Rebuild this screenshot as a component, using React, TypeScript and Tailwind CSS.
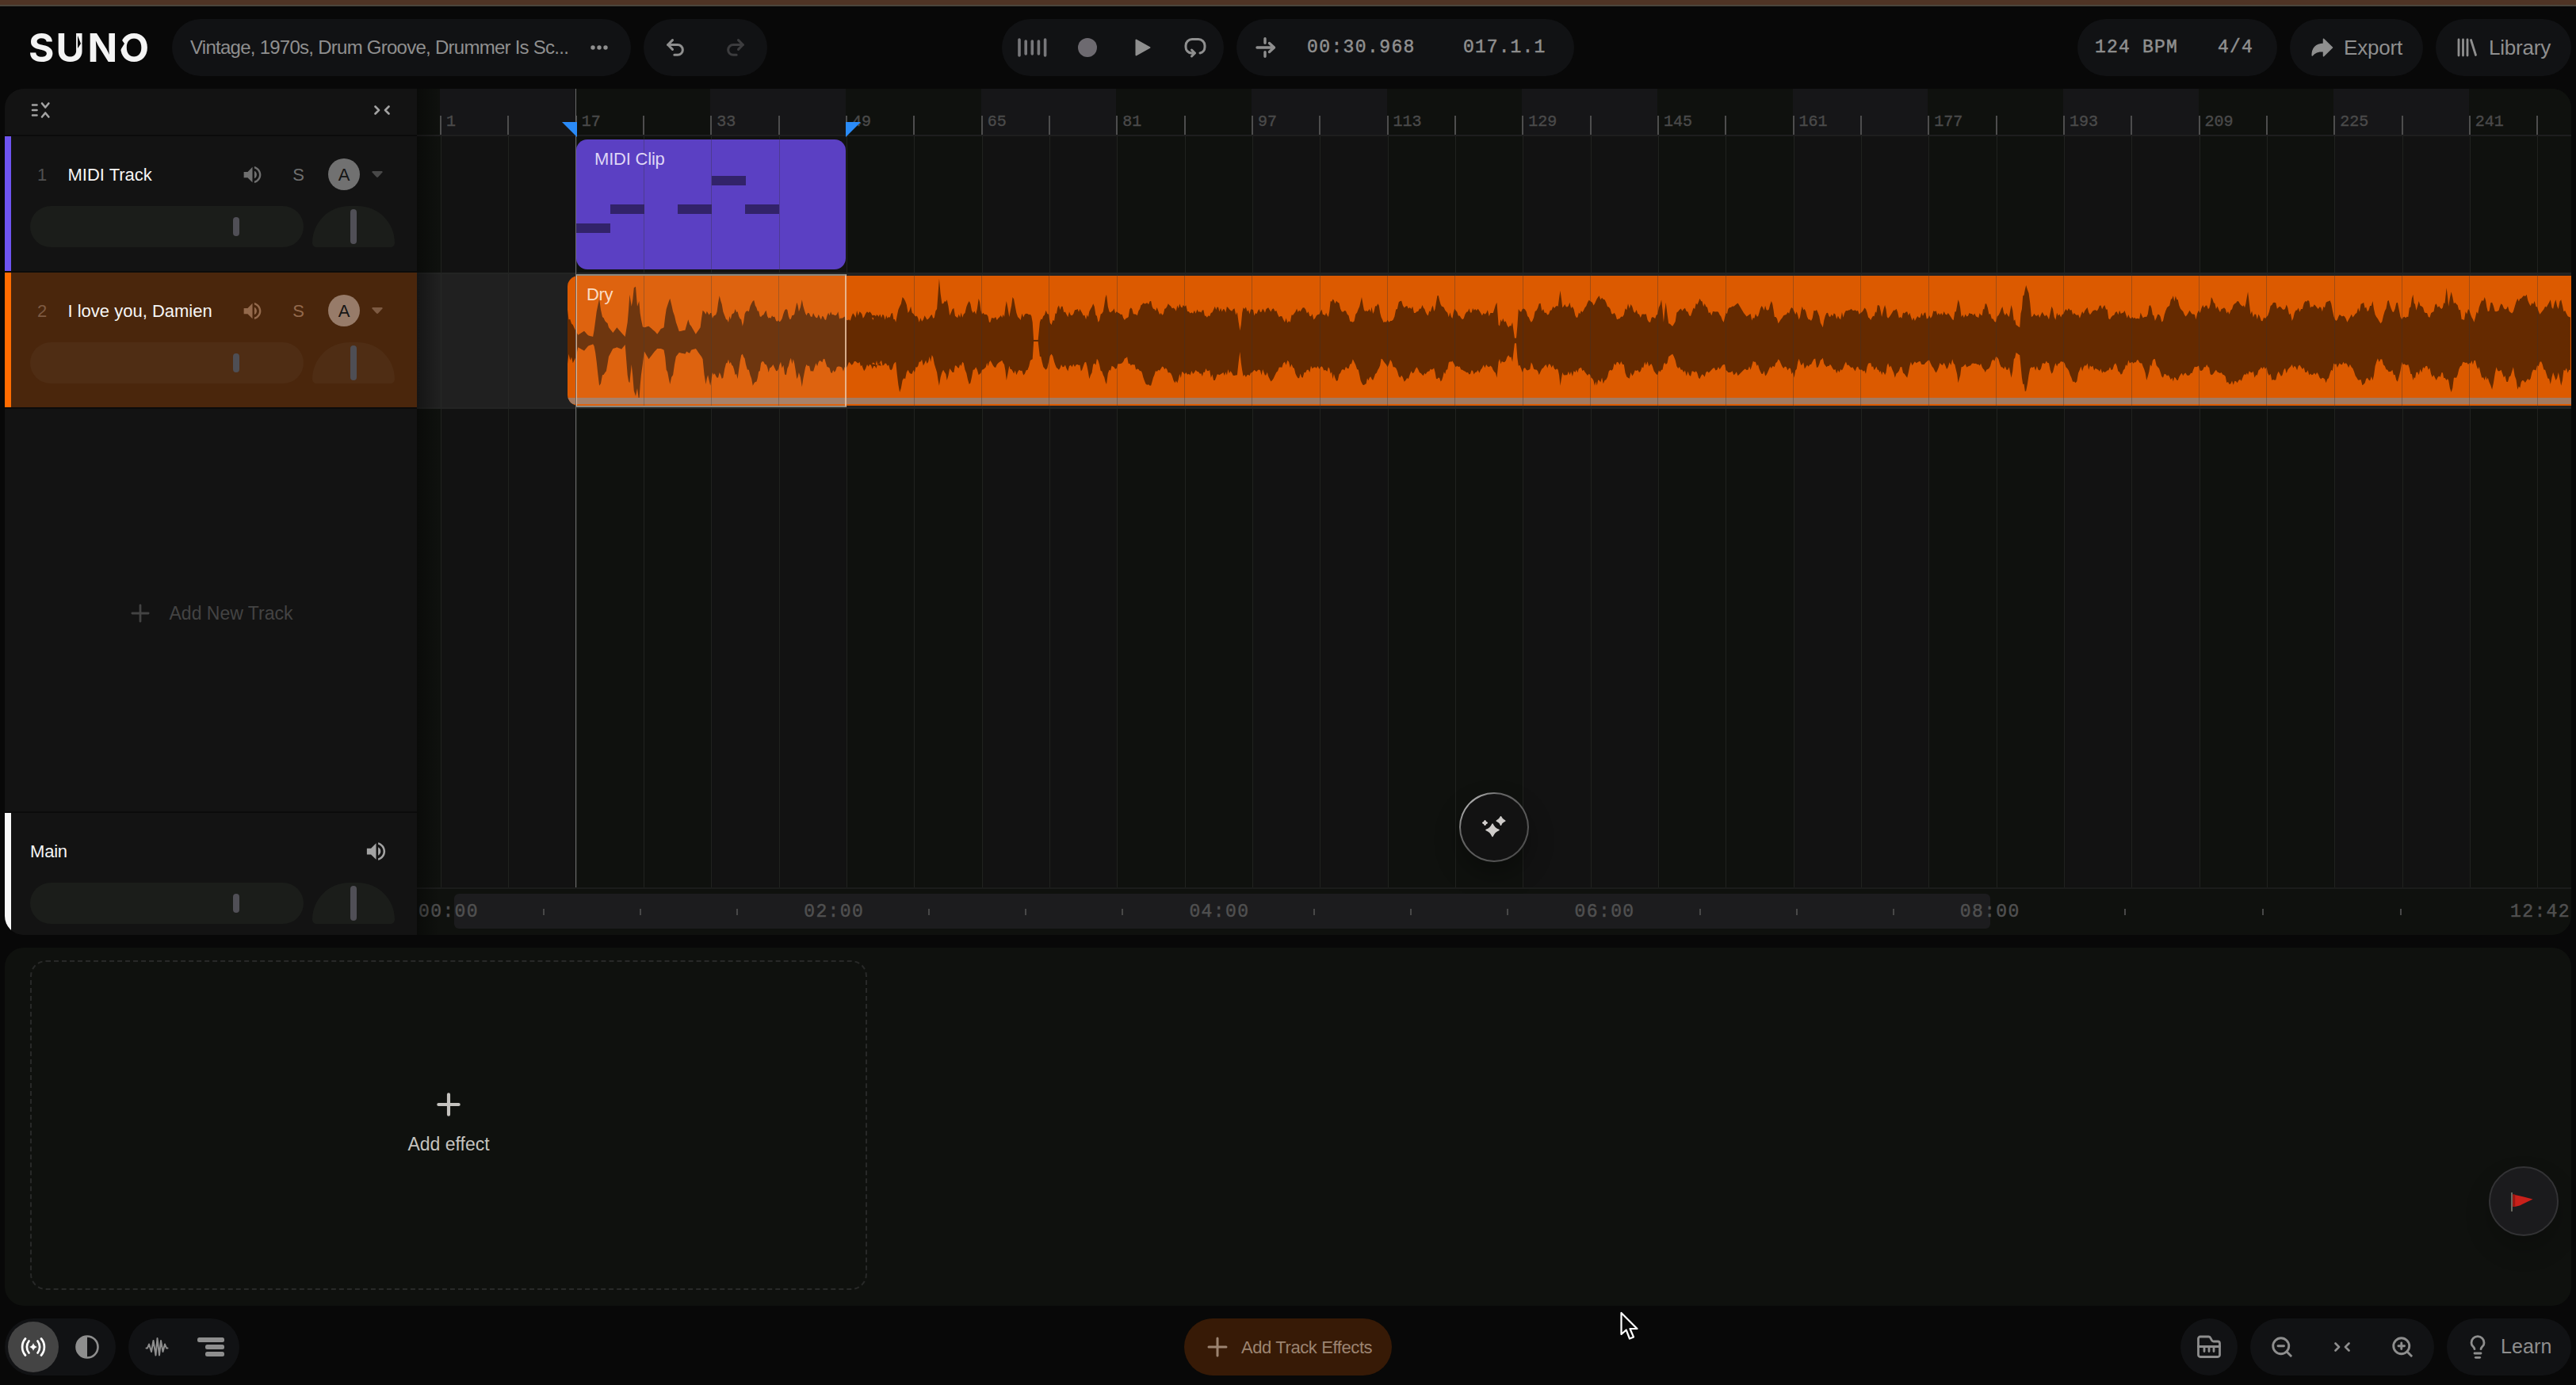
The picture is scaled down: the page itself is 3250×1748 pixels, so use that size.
import React from 'react';
import { Undo2, Redo2, ZoomIn, ZoomOut, Lightbulb } from 'lucide-react';
import { MdVolumeUp } from 'react-icons/md';

const BARS = Array.from({ length: 32 }, (_, i) => i);
const BAR_WIDTH = 85.34;

// each chunk: where it starts in the clip, px per unit, then [x, up, down] peaks
const chunks: { start: number; unit: number; peaks: number[][] }[] = [
  {
    start: -196,
    unit: 0.3827,
    peaks: [
      [512, 120, 90], [516, 80, 50], [530, 60, 85], [540, 35, 60], [547, 22, 25], [567, 37, 38], [580, 20, 20], [596, 15, 13], [600, 40, 20], [608, 110, 80], [617, 158, 170], [627, 90, 130], [640, 70, 115], [648, 50, 60], [662, 30, 30], [675, 50, 25], [690, 30, 32], [702, 15, 15],
      [710, 70, 130], [717, 175, 160], [723, 130, 90], [731, 200, 190], [737, 205, 210], [742, 130, 180], [748, 150, 232], [755, 80, 130], [765, 50, 40], [780, 55, 70], [800, 35, 40], [808, 25, 30], [820, 45, 30], [830, 50, 35], [838, 120, 110], [850, 160, 165], [860, 110, 130], [870, 70, 60], [880, 35, 45], [900, 40, 50], [910, 80, 45], [920, 55, 35],
      [935, 25, 30], [950, 50, 55], [958, 115, 70], [968, 100, 165], [975, 105, 130], [983, 105, 170], [990, 85, 120], [1005, 110, 140], [1013, 170, 120], [1025, 110, 140], [1035, 80, 85], [1050, 80, 80], [1065, 120, 130], [1073, 110, 145], [1085, 80, 55], [1089, 55, 50], [1100, 110, 90], [1110, 110, 110], [1123, 150, 170], [1135, 125, 155], [1150, 90, 85],
      [1167, 115, 90], [1175, 85, 120], [1190, 90, 90], [1200, 75, 115], [1215, 75, 80], [1233, 120, 130], [1245, 80, 75], [1260, 100, 85], [1268, 145, 145], [1275, 110, 120], [1285, 155, 175], [1300, 95, 90], [1318, 90, 115], [1340, 100, 80], [1360, 80, 70], [1380, 110, 120], [1400, 100, 100], [1430, 80, 105], [1440, 80, 80], [1475, 110, 80], [1490, 90, 115], [1500, 110, 90], [1530, 90, 105], [1550, 95, 80],
    ],
  },
  {
    start: 384,
    unit: 0.7015,
    peaks: [
      [0, 88, 88], [15, 100, 80], [28, 85, 95], [37, 105, 105], [43, 70, 80], [50, 130, 195], [55, 165, 150], [60, 150, 145], [65, 105, 110], [70, 130, 125], [77, 95, 120], [85, 70, 80], [95, 95, 85], [110, 85, 62], [117, 120, 120], [121, 235, 170], [126, 140, 120], [131, 150, 120], [135, 155, 150], [140, 95, 105], [145, 120, 120], [152, 90, 95], [165, 100, 85],
      [175, 150, 165], [182, 105, 110], [187, 100, 100], [192, 160, 130], [198, 100, 110], [205, 100, 100], [213, 70, 75], [220, 85, 100], [230, 90, 80], [238, 90, 90], [242, 150, 150], [247, 90, 95], [253, 165, 115], [260, 105, 130], [265, 85, 110], [275, 100, 125], [285, 100, 75], [289, 70, 70], [291, 3, 3], [299, 3, 3], [302, 70, 60], [306, 80, 80], [313, 115, 110], [318, 100, 80], [323, 60, 50],
      [328, 75, 80], [334, 125, 105], [343, 130, 100], [350, 100, 105], [360, 95, 100], [370, 120, 90], [378, 105, 110], [385, 80, 80], [391, 110, 145], [398, 140, 90], [407, 70, 75], [416, 110, 130], [422, 175, 165], [427, 110, 110], [440, 110, 105], [450, 100, 85], [457, 85, 65], [468, 120, 90], [475, 100, 110], [482, 120, 115], [490, 140, 150], [500, 150, 170], [508, 120, 130],
      [520, 105, 105], [535, 135, 120], [545, 120, 160], [560, 135, 120], [570, 110, 125], [580, 115, 120], [590, 110, 125], [605, 95, 115], [617, 130, 150], [625, 110, 130], [632, 120, 120], [645, 115, 115], [657, 108, 130], [662, 38, 42], [668, 125, 135], [675, 110, 130], [690, 105, 115], [705, 115, 120], [713, 125, 135], [720, 120, 150], [730, 100, 115], [740, 80, 85], [750, 75, 80],
      [762, 110, 125], [775, 125, 140], [785, 110, 110], [797, 85, 100], [807, 110, 100], [815, 95, 110], [821, 90, 100], [825, 150, 125], [833, 140, 140], [838, 145, 150], [845, 110, 110], [855, 100, 105], [865, 70, 70], [875, 120, 110], [881, 165, 160], [887, 110, 165], [895, 120, 140], [903, 110, 140], [910, 140, 110], [918, 80, 70], [925, 70, 90], [935, 75, 80], [945, 120, 115],
      [950, 150, 140], [960, 130, 150], [970, 120, 115], [980, 110, 100], [990, 135, 130], [998, 100, 120], [1007, 125, 110], [1013, 120, 120], [1017, 170, 145], [1025, 130, 150], [1033, 110, 110], [1042, 90, 80], [1050, 115, 100], [1062, 80, 110], [1072, 110, 120], [1085, 120, 120], [1095, 105, 110], [1105, 105, 90], [1115, 105, 100], [1124, 145, 140], [1127, 60, 80], [1135, 85, 80],
      [1145, 50, 55], [1152, 70, 80], [1156, 10, 10], [1159, 10, 10], [1163, 120, 95], [1170, 120, 120], [1177, 110, 110], [1188, 75, 90], [1200, 140, 130], [1210, 105, 95], [1220, 115, 90], [1230, 130, 110], [1234, 130, 110], [1238, 190, 170], [1242, 125, 120], [1255, 145, 130], [1265, 95, 120], [1280, 115, 110], [1292, 150, 130], [1300, 140, 170], [1308, 170, 150], [1318, 155, 150],
      [1328, 120, 110], [1340, 80, 80], [1350, 90, 90], [1360, 140, 140], [1370, 110, 125], [1380, 100, 120], [1390, 100, 80], [1400, 70, 90], [1413, 100, 130], [1420, 155, 110], [1424, 70, 90], [1428, 145, 90], [1433, 65, 60], [1440, 55, 50], [1450, 110, 105], [1460, 120, 120], [1470, 95, 130], [1480, 120, 120], [1489, 160, 145], [1500, 130, 120], [1510, 95, 110], [1520, 110, 110],
      [1532, 70, 90], [1540, 120, 120], [1550, 130, 130], [1560, 130, 120],
    ],
  },
  {
    start: 1484,
    unit: 0.6696,
    peaks: [
      [0, 105, 110], [8, 95, 110], [20, 85, 80], [36, 125, 125], [45, 115, 120], [52, 150, 105], [58, 90, 100], [65, 65, 70], [75, 95, 105], [88, 120, 105], [95, 110, 140], [102, 95, 80], [106, 90, 80], [110, 130, 90], [117, 110, 100], [127, 75, 90], [132, 115, 70], [140, 105, 100], [149, 50, 65], [156, 105, 100], [165, 100, 95], [180, 85, 120], [190, 105, 90], [205, 115, 100],
      [220, 105, 110], [230, 120, 125], [237, 85, 85], [248, 110, 105], [254, 135, 110], [260, 90, 130], [266, 135, 130], [272, 85, 85], [285, 115, 140], [295, 90, 100], [308, 110, 140], [315, 90, 80], [325, 85, 85], [340, 105, 90], [347, 85, 75], [360, 110, 115], [372, 105, 90], [385, 105, 100], [393, 80, 70], [400, 110, 110], [404, 155, 160], [410, 90, 100], [425, 105, 95],
      [440, 90, 90], [449, 95, 100], [455, 140, 120], [462, 100, 105], [475, 70, 60], [485, 120, 100], [495, 105, 110], [500, 90, 100], [504, 135, 140], [509, 75, 70], [513, 60, 45], [520, 50, 55], [526, 170, 165], [532, 210, 190], [537, 180, 130], [542, 90, 100], [555, 100, 110], [565, 100, 85], [575, 80, 85], [580, 130, 125], [585, 90, 100], [600, 100, 80], [607, 120, 100],
      [615, 115, 130], [625, 100, 160], [633, 85, 110], [645, 120, 95], [655, 105, 100], [668, 120, 110], [680, 135, 120], [690, 80, 100], [703, 110, 95], [713, 105, 125], [720, 100, 90], [732, 90, 80], [750, 95, 85], [759, 90, 150], [766, 135, 90], [775, 75, 70], [780, 100, 100], [790, 75, 140], [800, 130, 130], [807, 160, 140], [818, 155, 150], [830, 100, 125], [840, 115, 130],
      [852, 80, 100], [865, 135, 110], [875, 120, 100], [881, 165, 130], [890, 120, 110], [900, 120, 120], [905, 125, 130], [915, 100, 165], [930, 150, 160], [940, 130, 140], [946, 140, 130], [950, 185, 130], [955, 100, 120], [965, 100, 130], [975, 75, 100], [985, 90, 100], [995, 135, 150], [1010, 130, 125], [1025, 125, 110], [1033, 75, 90], [1040, 115, 100], [1050, 120, 100],
      [1058, 150, 120], [1070, 130, 130], [1080, 125, 120], [1090, 110, 140], [1097, 145, 160], [1107, 140, 110], [1114, 80, 90], [1125, 95, 90], [1137, 70, 90], [1145, 100, 100], [1155, 105, 140], [1168, 145, 165], [1175, 110, 140], [1185, 150, 150], [1192, 90, 80], [1200, 65, 70], [1213, 150, 110], [1222, 110, 110], [1232, 145, 155], [1240, 80, 80], [1252, 90, 90],
      [1261, 175, 150], [1267, 115, 120], [1272, 150, 130], [1280, 125, 100], [1290, 90, 110], [1300, 110, 130], [1305, 140, 150], [1315, 120, 120], [1321, 140, 140], [1324, 200, 150], [1328, 130, 150], [1333, 185, 195], [1338, 140, 140], [1345, 135, 130], [1355, 80, 80], [1365, 120, 90], [1376, 70, 75], [1388, 140, 120], [1396, 165, 150], [1402, 110, 140], [1410, 145, 185],
      [1418, 110, 100], [1427, 140, 110], [1437, 120, 155], [1450, 110, 100], [1458, 160, 185], [1467, 165, 150], [1475, 175, 150], [1480, 140, 150], [1490, 150, 110], [1500, 100, 80], [1510, 130, 110], [1520, 155, 165], [1525, 120, 120], [1530, 155, 150], [1535, 120, 120], [1540, 155, 170], [1545, 110, 110], [1555, 90, 110], [1560, 110, 120],
    ],
  },
];

const jitter = (n: number) => {
  const s = Math.sin(n * 12.9898) * 43758.5453;
  return s - Math.floor(s) - 0.5;
};

function buildWaveform(mid: number) {
  const top: string[] = [];
  const bottom: string[] = [];
  chunks.forEach(({ start, unit, peaks }) => {
    for (let i = 0; i < peaks.length - 1; i++) {
      const [x0, u0, d0] = peaks[i];
      const [x1, u1, d1] = peaks[i + 1];
      const steps = Math.max(1, Math.round(((x1 - x0) * unit) / 1.6));
      for (let s = 0; s < steps; s++) {
        const t = s / steps;
        const x = start + (x0 + (x1 - x0) * t) * unit;
        const up = u0 + (u1 - u0) * t;
        const down = d0 + (d1 - d0) * t;
        const rough = s === 0 || up < 60 ? 0 : 26;
        top.push(`${x.toFixed(1)},${(mid - (up + jitter(x) * rough) / 3).toFixed(1)}`);
        bottom.push(`${x.toFixed(1)},${(mid + (down + jitter(x + 7) * rough) / 3).toFixed(1)}`);
      }
    }
  });
  return [...top, ...bottom.reverse()].join(' ');
}

const waveform = buildWaveform(82);

const notes = [
  { x: 0, y: 106 },
  { x: 42.6, y: 82 },
  { x: 128, y: 82 },
  { x: 170.6, y: 46 },
  { x: 213.3, y: 82 },
];

const timeLabels = ['00:00', '02:00', '04:00', '06:00', '08:00'];

function Collapse({ className }: { className?: string }) {
  return (
    <svg width="20" height="12" viewBox="0 0 20 12" fill="none" stroke="currentColor" strokeWidth="2.6" strokeLinecap="round" strokeLinejoin="round" className={className}>
      <path d="M1.5 1.5 6 6l-4.5 4.5M18.5 1.5 14 6l4.5 4.5" />
    </svg>
  );
}

function Plus({ size, stroke }: { size: number; stroke: number }) {
  return (
    <svg width={size} height={size} viewBox="0 0 26 26" fill="none" stroke="currentColor" strokeWidth={stroke} strokeLinecap="round">
      <path d="M13 2v22M2 13h22" />
    </svg>
  );
}

function Pill({ className, children }: { className?: string; children: React.ReactNode }) {
  return <div className={`flex h-[72px] shrink-0 items-center rounded-full bg-[#111214] ${className ?? ''}`}>{children}</div>;
}

function Logo() {
  return (
    <svg width="170" height="64" viewBox="-8 -10 170 64" className="shrink-0">
      <text x="-1 33.5 73.5 113" y="40" fill="#f4f4f4" fontSize="49.5" fontWeight="700" fontFamily="Inter, sans-serif">
        SUNO
      </text>
      {/* pinched strokes of U and O */}
      <path d="M71.500 9 66.500 17l5 8zM61 7l4 10-4 6zM113.500 8 120 17l-5.500 9z" fill="#080808" />
    </svg>
  );
}

function Sliders({ selected }: { selected?: boolean }) {
  const track = selected ? 'bg-[#4f2d14]' : 'bg-[#1b1d1a]';
  const handle = selected ? 'bg-[#4e4e54]' : 'bg-[#504f56]';
  return (
    <div className="mt-5 flex h-[52px] gap-[11px]">
      <div className={`flex w-[345px] items-center rounded-full pl-64 ${track}`}>
        <div className={`h-6 w-2 rounded-full ${handle}`} />
      </div>
      <div className={`flex w-[104px] items-center justify-center rounded-t-[52px] rounded-b-[6px] ${track}`}>
        <div className={`h-11 w-2 rounded-full ${handle}`} />
      </div>
    </div>
  );
}

function TrackRow({ index, name, selected }: { index: number; name: string; selected?: boolean }) {
  const dim = selected ? 'text-[#93694c]' : 'text-[#6f6f6f]';
  return (
    <div className={`mb-0.5 flex h-[170px] ${selected ? 'bg-[#4a260c]' : 'bg-[#131313]'}`}>
      <div className={`w-2 ${selected ? 'bg-[#ff6b00]' : 'bg-[#6e54f0]'}`} />
      <div className="flex-1 pt-7 pr-7 pl-6">
        <div className="flex h-10 items-center text-[22px]">
          <span className={`w-[30px] text-center ${selected ? 'text-[#7d5a42]' : 'text-[#505050]'}`}>{index}</span>
          <span className="ml-[17.5px] flex-1 text-[#f6f6f6]">{name}</span>
          <MdVolumeUp size={29} className={dim} />
          <span className={`ml-[23px] w-[41px] text-center ${dim}`}>S</span>
          <span className={`ml-[17px] flex size-10 items-center justify-center rounded-full text-[22px] text-[#151515] ${selected ? 'bg-[#977b69]' : 'bg-[#717171]'}`}>A</span>
          <svg width="14" height="8" viewBox="0 0 14 8" className={`mr-[15px] ml-[15px] ${selected ? 'text-[#7d5a42]' : 'text-[#484848]'}`}>
            <path d="M1 0h12q1 .5.5 1.500L8 7.500q-1 .8-2 0L.5 1.500Q0 .5 1 0z" fill="currentColor" />
          </svg>
        </div>
        <Sliders selected={selected} />
      </div>
    </div>
  );
}

// vertical bar lines drawn over a clip, `offset` is the distance to the first one
function ClipGrid({ offset }: { offset: number }) {
  return (
    <div className="pointer-events-none absolute inset-y-0 right-0 flex" style={{ left: offset }}>
      {BARS.map((i) => (
        <div key={i} className="shrink-0 border-l border-[#333]/35" style={{ width: BAR_WIDTH }} />
      ))}
    </div>
  );
}

function Header() {
  return (
    <header className="grid h-[104px] shrink-0 grid-cols-[1fr_auto_1fr] items-center px-1.5 text-[#8f8f8f]">
      <div className="flex items-center gap-4">
        <div className="-mr-4 w-[211px] pl-[23px]">
          <Logo />
        </div>
        <Pill className="w-[579px] pl-[23px]">
          <span className="w-[490px] text-2xl tracking-[-0.74px] whitespace-nowrap">Vintage, 1970s, Drum Groove, Drummer Is Sc...</span>
          <svg width="22" height="6" viewBox="0 0 22 6" fill="currentColor" className="ml-[15px]">
            <circle cx="3" cy="3" r="2.7" />
            <circle cx="11" cy="3" r="2.7" />
            <circle cx="19" cy="3" r="2.7" />
          </svg>
        </Pill>
        <Pill className="w-[156px] justify-between px-[26px]">
          <Undo2 size={28} strokeWidth={2.6} />
          <Redo2 size={28} strokeWidth={2.6} className="text-[#3c3c3e]" />
        </Pill>
      </div>

      <div className="flex gap-4">
        <Pill className="w-[280px] pl-5">
          <svg width="37" height="24" viewBox="0 0 37 24" stroke="#77777a" strokeWidth="3.6" strokeLinecap="round">
            <path d="M2 2v20M10.200 4v16M18.300 4v16M26.400 4v16M34.600 2v20" />
          </svg>
          <div className="ml-[39px] size-6 rounded-full bg-[#6d6a70]" />
          <svg width="20" height="22" viewBox="0 0 20 22" className="ml-12">
            <path d="M1.500 1.500v19L18.500 11z" fill="currentColor" stroke="currentColor" strokeWidth="2" strokeLinejoin="round" />
          </svg>
          {/* open loop with the arrow at its lower left */}
          <svg width="28" height="26" viewBox="0 0 28 26" fill="none" stroke="currentColor" strokeWidth="3" strokeLinecap="round" strokeLinejoin="round" className="ml-[42px]">
            <path d="M20 20a8 8 0 0 0 6-7.500V10.500A8 8 0 0 0 18 2.500h-8A8 8 0 0 0 2 10.500v2A7.500 7.500 0 0 0 9 20h3M9.500 16l4 4-4 4" />
          </svg>
        </Pill>
        <Pill className="w-[426px] pl-6 font-['Liberation_Mono',monospace] text-[23px] [-webkit-text-stroke:0.5px]">
          <svg width="26" height="26" viewBox="0 0 26 26" fill="none" stroke="currentColor" strokeWidth="3.4" strokeLinecap="round" strokeLinejoin="round">
            <path d="M12 1.800v5.400M12 18.800v5.400M2 13h21M17.500 7.500 23.500 13l-6 5.500" />
          </svg>
          <span className="ml-[39px] w-[197px] tracking-[1.4px]">00:30.968</span>
          <span className="tracking-[1.1px]">017.1.1</span>
        </Pill>
      </div>

      <div className="flex justify-end gap-4 text-[26px] tracking-[-0.2px]">
        <Pill className="w-[252px] pl-[22px] font-['Liberation_Mono',monospace] text-[23px] tracking-[1.2px] [-webkit-text-stroke:0.5px]">
          <span className="w-[155px]">124 BPM</span>
          <span>4/4</span>
        </Pill>
        <Pill className="w-[168px] pl-[27px]">
          <svg width="28" height="24" viewBox="0 0 28 24" fill="currentColor" stroke="currentColor" strokeWidth="1.5" strokeLinejoin="round">
            <path d="M15.500 1.200 26.500 12 15.500 22.800v-6.300C9 16.500 4.500 17.500 1.200 22 1.200 13 6.500 7.800 15.500 7.300z" />
          </svg>
          <span className="ml-[13px]">Export</span>
        </Pill>
        <Pill className="w-[171px] pl-[27px]">
          <svg width="26" height="24" viewBox="0 0 26 24" fill="none" stroke="currentColor" strokeWidth="2.8" strokeLinecap="round">
            <path d="M2 2v20M7.500 2v20M13 2v20M17.500 2.500 23.500 21.500" />
          </svg>
          <span className="ml-[14px]">Library</span>
        </Pill>
      </div>
    </header>
  );
}

function Sidebar() {
  return (
    <aside className="flex w-[520px] shrink-0 flex-col bg-[#0b0b0b]">
      <div className="mb-0.5 flex h-[58px] items-center justify-between bg-[#131313] pr-[34px] pb-1 pl-[33px] text-[#a3a3a3]">
        <svg width="25" height="22" viewBox="0 0 25 22" fill="none" stroke="currentColor" strokeWidth="2.6" strokeLinecap="round" strokeLinejoin="round">
          <path d="M2 4.500h5.500M2 11h5.500M2 17.500h5.500M14 2.500l4.200 5 4.200-5M14 19.500l4.200-5 4.200 5" />
        </svg>
        <Collapse />
      </div>
      <TrackRow index={1} name="MIDI Track" />
      <TrackRow index={2} name="I love you, Damien" selected />
      <div className="mb-0.5 flex flex-1 items-center justify-center bg-[#131313] pt-2 pl-0.5 text-[#434343]">
        <Plus size={24} stroke={3} />
        <span className="ml-[25px] text-[23px]">Add New Track</span>
      </div>
      <div className="flex h-[154px] bg-[#131313]">
        <div className="w-2 bg-[#f8f8f8]" />
        <div className="flex-1 pt-7 pr-7 pl-6">
          <div className="flex h-10 items-center justify-between pr-2">
            <span className="text-[22px] tracking-[-0.2px] text-[#f6f6f6]">Main</span>
            <MdVolumeUp size={31} className="text-[#a3a3a3]" />
          </div>
          <Sliders />
        </div>
      </div>
    </aside>
  );
}

function Ticks({ className }: { className: string }) {
  return (
    <div className={`flex shrink-0 ${className}`}>
      <div className="h-2 w-0.5 shrink-0 bg-[#484848]" />
      <div className="h-2 w-0.5 shrink-0 bg-[#484848]" />
      <div className="h-2 w-0.5 shrink-0 bg-[#484848]" />
    </div>
  );
}

function Timeline() {
  return (
    <div className="relative flex min-w-0 flex-1 flex-col overflow-hidden bg-[#0f110e]">
      {/* bar columns behind the lanes */}
      <div className="absolute top-[60px] bottom-[60px] left-[30px] flex">
        {BARS.map((i) => (
          <div
            key={i}
            className={`shrink-0 border-l border-[#20221f] ${i % 4 < 2 ? 'bg-[#121212]' : 'bg-[#0f110e]'}`}
            style={{ width: BAR_WIDTH }}
          />
        ))}
      </div>

      <div className="relative h-[60px] overflow-hidden border-b-2 border-[#1e1e1e] pl-[29px]">
        <div className="flex h-[60px]">
          {BARS.map((i) => (
            <div key={i} className={`flex shrink-0 items-end ${i % 4 < 2 ? 'bg-[#161618]' : 'bg-[#0f110e]'}`} style={{ width: BAR_WIDTH }}>
              <div className="h-[26px] w-0.5 bg-[#4d4d4d]" />
              {i % 2 === 0 && (
                <span className="mb-2 ml-1.5 font-['Liberation_Mono',monospace] text-xl leading-5 text-[#4a4a4a] [-webkit-text-stroke:0.4px]">{i * 8 + 1}</span>
              )}
            </div>
          ))}
        </div>
      </div>

      <div className="relative h-[172px]">
        <div className="absolute top-1 left-[201px] h-[164px] w-[340px] overflow-hidden rounded-[14px] bg-[#5b40c3]">
          {notes.map((n) => (
            <div key={n.x} className="absolute h-3 w-[43px] bg-[#32236a]" style={{ left: n.x, top: n.y }} />
          ))}
          <ClipGrid offset={85} />
          <span className="absolute top-2 left-[23px] text-[22px] tracking-[-0.2px] text-[#dfd6f6]">MIDI Clip</span>
        </div>
      </div>

      <div className="relative h-[172px] border-y-2 border-[#232423] bg-[#202020]">
        <div className="absolute inset-y-0 left-[30px] flex">
          {BARS.map((i) => (
            <div key={i} className="shrink-0 border-l border-[#262826]" style={{ width: BAR_WIDTH }} />
          ))}
        </div>
        <div className="absolute top-0.5 right-0 left-[190px] h-[164px] overflow-hidden rounded-l-[14px] bg-[#dc5a00]">
          <svg width="2528" height="164" viewBox="0 0 2528 164" className="absolute top-0 left-0 max-w-none">
            <polygon points={waveform} fill="#652a00" />
          </svg>
          <div className="absolute inset-x-0 bottom-0.5 h-2 bg-[#a37a60]" />
          <ClipGrid offset={95.5} />
        </div>
        <div className="absolute top-0 left-[200px] h-[168px] w-[342px] border-2 border-x-[#f0c9a8]/80 border-y-[#96938b]/90 bg-white/6">
          <span className="absolute top-[7px] left-[12px] text-[22px] tracking-[-0.3px] text-[#fbdcc4]">Dry</span>
        </div>
      </div>

      <div className="relative flex-1">
        <button className="absolute bottom-8 left-[1315px] flex size-[88px] items-center justify-center rounded-full bg-gradient-to-br from-[#f0f0f0] via-[#666] via-30% to-[#4a4a4a] p-0.5 shadow-[0_16px_32px_rgba(0,0,0,0.3)]">
          <span className="flex size-full items-center justify-center rounded-full bg-[#121212]">
            <svg width="32" height="30" viewBox="0 0 32 30" fill="#cfccca" stroke="#cfccca" strokeLinejoin="round" className="-mt-0.5">
              <path d="M14 12q2.500 5.500 8 7.500-5.500 2-8 8-2.500-6-8-8 5.500-2 8-7.500z" strokeWidth="1.5" />
              <path d="M24.500 2.500q1.800 4 5.500 5.500-3.700 1.500-5.500 5.500-1.800-4-5.500-5.500 3.700-1.500 5.500-5.500z" strokeWidth="1.2" />
              <path d="M4.500 7q1 2.500 3.500 3.500-2.500 1-3.500 3.500-1-2.500-3.500-3.500 2.500-1 3.500-3.500z" strokeWidth="1" />
            </svg>
          </span>
        </button>
      </div>

      <div className="relative h-[60px] border-t-2 border-[#1b1c1b]">
        <div className="absolute top-1.5 bottom-2 left-[47px] w-[1938px] rounded-md bg-[#1c1c1e]" />
        <div className="relative flex h-[58px] items-center font-['Liberation_Mono',monospace] text-[23px] tracking-[1.4px] text-[#505050] [-webkit-text-stroke:0.5px]">
          {timeLabels.map((label, i) => (
            <div key={label} className="flex w-[486.2px] shrink-0 items-center">
              <span className="w-[159px] shrink-0 pl-0.5">{label}</span>
              <Ticks className={i < 4 ? 'gap-[120px]' : 'ml-[50px] gap-[172px]'} />
            </div>
          ))}
          <span className="ml-auto pr-px">12:42</span>
        </div>
      </div>

      {/* playhead */}
      <div className="absolute top-0 bottom-[60px] left-[200px] w-px bg-[#6a6a6a]" />
      {/* loop markers */}
      <svg width="19" height="19" viewBox="0 0 19 19" className="absolute top-[42px] left-[183px]">
        <path d="M0 0h19v19z" fill="#2a8bf8" />
      </svg>
      <svg width="19" height="19" viewBox="0 0 19 19" className="absolute top-[42px] left-[541px]">
        <path d="M0 0h19L0 19z" fill="#2a8bf8" />
      </svg>
      <div className="pointer-events-none absolute inset-y-0 left-0 w-7 bg-gradient-to-r from-black/35 to-transparent" />
    </div>
  );
}

function Effects() {
  return (
    <section className="relative mt-4 h-[452px] shrink-0 rounded-3xl bg-[#0f110e] pt-4 pl-8">
      <div className="flex h-[416px] w-[1056px] flex-col items-center justify-center rounded-[20px] border-2 border-dashed border-[#282928] text-[#c5c3bf]">
        <Plus size={30} stroke={3.6} />
        <span className="mt-[18px] text-[23px] leading-[34px]">Add effect</span>
      </div>
      <button className="absolute top-[276px] right-4 flex size-[88px] items-center justify-center rounded-full border-2 border-[#333335] bg-[#1b1b1d] shadow-[0_16px_32px_rgba(0,0,0,0.2)]">
        <svg width="28" height="26" viewBox="0 0 28 26" className="mt-0.5 mr-1">
          <path d="M1 1v24" stroke="#7d7d70" strokeWidth="1.6" />
          <path d="M2.200 3.500Q10 5 16 6.500L27.500 9.500 14 16q-4 2.500-11.800 3z" fill="#c9201a" />
          <path d="M2.200 3.500h3v15.300l-3 .2z" fill="#9a1712" />
        </svg>
      </button>
    </section>
  );
}

function Footer() {
  return (
    <footer className="grid h-[88px] shrink-0 grid-cols-[1fr_auto_1fr] items-center pt-4 text-[#8e8e8e]">
      <div className="flex gap-4">
        <Pill className="w-[140px] pl-1">
          <div className="flex size-16 items-center justify-center rounded-full bg-[#444]">
            <svg width="32" height="24" viewBox="0 0 32 24" fill="none" stroke="#fff" strokeWidth="2.7" strokeLinecap="round">
              <path d="M6 1.500a16 16 0 0 0 0 21M26 1.500a16 16 0 0 1 0 21M10.500 4.500a12 12 0 0 0 0 15M21.500 4.500a12 12 0 0 1 0 15" />
              <path d="M16 7q1 4 5 5-4 1-5 5-1-4-5-5 4-1 5-5z" fill="#fff" stroke="none" />
            </svg>
          </div>
          <svg width="30" height="30" viewBox="0 0 30 30" className="ml-[21px]">
            <circle cx="15" cy="15" r="13.5" fill="none" stroke="currentColor" strokeWidth="2.6" />
            <path d="M15 1a14 14 0 0 0 0 28z" fill="currentColor" />
          </svg>
        </Pill>
        <Pill className="w-[140px] pl-[21px]">
          <svg width="30" height="24" viewBox="0 0 30 24" fill="none" stroke="currentColor" strokeWidth="2" strokeLinejoin="round" strokeLinecap="round">
            <path d="M1.500 13.500H3L5 8.500l3 9.500L10.500 4l3 18.500L15.500 1l2.500 21.500L20 4l2.500 14L25 8.500l2 5h1.500" />
          </svg>
          <svg width="34" height="24" viewBox="0 0 34 24" fill="currentColor" className="ml-9">
            <rect width="34" height="6" rx="2.5" />
            <rect x="10" y="9" width="24" height="6" rx="2.5" />
            <rect x="10" y="18" width="24" height="6" rx="2.5" />
          </svg>
        </Pill>
      </div>

      <div className="flex h-[72px] w-[262px] items-center rounded-full bg-[#371a06] pl-[29px] text-[#9c8471]">
        <Plus size={26} stroke={3} />
        <span className="ml-[17px] text-[22px] tracking-[-0.4px] whitespace-nowrap">Add Track Effects</span>
      </div>

      <div className="flex justify-end gap-4">
        <Pill className="w-[72px] justify-center">
          <svg width="32" height="32" viewBox="0 0 32 32" fill="none" stroke="currentColor" strokeWidth="2.8" strokeLinejoin="round" strokeLinecap="round">
            <path d="M2.500 5.500A2.500 2.500 0 0 1 5 3h10.500a2.500 2.500 0 0 1 2.200 1.300l1.800 3.400A2.500 2.500 0 0 0 21.700 9H27a2.500 2.500 0 0 1 2.500 2.500V26a2.500 2.500 0 0 1-2.500 2.500H5A2.500 2.500 0 0 1 2.500 26z" />
            <path d="M2.500 15.500h27M10 16v5.500M16 16v5.500M22 16v5.500" />
          </svg>
        </Pill>
        <Pill className="w-[232px] justify-between px-[25px]">
          <ZoomOut size={30} strokeWidth={2.3} />
          <Collapse />
          <ZoomIn size={30} strokeWidth={2.3} />
        </Pill>
        <Pill className="w-[157px] pl-[23px]">
          <Lightbulb size={32} strokeWidth={2.1} />
          <span className="ml-[13px] text-[25px] tracking-[0.1px]">Learn</span>
        </Pill>
      </div>
    </footer>
  );
}

export default function App() {
  return (
    <div className="relative flex h-[1748px] w-[3250px] flex-col overflow-hidden bg-[#080808] font-['Liberation_Sans',Arial,sans-serif]">
      <div className="h-2 shrink-0 border-b-2 border-[#4b453c] bg-[#4f3425]" />
      <Header />
      <main className="px-1.5">
        <section className="flex h-[1068px] overflow-hidden rounded-3xl">
          <Sidebar />
          <Timeline />
        </section>
        <Effects />
        <Footer />
      </main>
      {/* pointer */}
      <svg width="26" height="40" viewBox="0 0 26 40" className="absolute top-[1654px] left-[2043px]">
        <path d="M2.500 3v27l6.200-5.500 4.300 11 5-2-4.500-10.500h9z" fill="#0a0a0a" stroke="#fff" strokeWidth="2.2" strokeLinejoin="round" />
      </svg>
    </div>
  );
}
